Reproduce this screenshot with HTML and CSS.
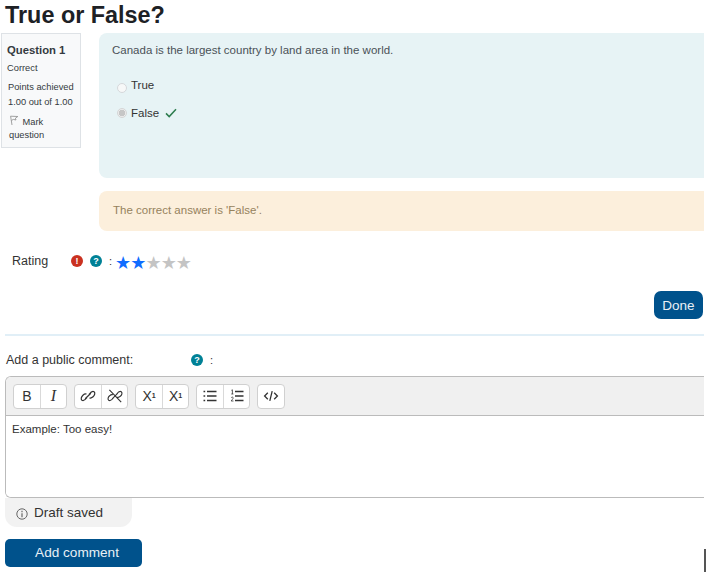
FILE: index.html
```html
<!DOCTYPE html>
<html lang="en">
<head>
<meta charset="utf-8">
<title>True or False?</title>
<link rel="stylesheet" href="styles.css">
</head>
<body>
<main class="page">
  <h1 class="title">True or False?</h1>
  <section class="question">
    <aside class="info">
      <h3 class="info-no">Question 1</h3>
      <div class="info-state">Correct</div>
      <div class="info-grade">Points achieved<br>1.00 out of 1.00</div>
      <div class="info-flag">
        <svg class="flag" viewBox="0 0 10 12" width="10" height="12"><path d="M1.5 1.2 8.8 1.5 6.4 3.2 7 5 4.3 4.4 2.6 5.4M1.6 1.2 3 10" fill="none" stroke="#8a8a8a" stroke-width=".8"/></svg>
        Mark question
      </div>
    </aside>
    <div class="qmain">
      <div class="formulation">
        <p class="qtext">Canada is the largest country by land area in the world.</p>
        <label class="answer answer-true"><span class="radio"></span><span class="answer-text">True</span></label>
        <label class="answer answer-false"><span class="radio radio-on"></span><span class="answer-text">False</span>
          <svg class="tick" viewBox="0 0 12 10" width="12" height="10"><path d="M1 5.4 4.2 8.6 11 1.2" fill="none" stroke="#2e7d4f" stroke-width="1.5"/></svg>
        </label>
      </div>
      <div class="outcome"><span class="outcome-text">The correct answer is 'False'.</span></div>
    </div>
  </section>
  <div class="rating">
    <span class="rating-label">Rating</span>
    <span class="badge badge-red">!</span>
    <span class="badge badge-teal">?</span>
    <span class="colon">:</span>
    <span class="stars"><span class="star star-on">★</span><span class="star star-on">★</span><span class="star">★</span><span class="star">★</span><span class="star">★</span></span>
  </div>
  <div class="done-row"><button class="btn btn-done">Done</button></div>
  <hr class="rule">
  <div class="comment-label">
    <span class="comment-text">Add a public comment:</span>
    <span class="badge badge-teal">?</span>
    <span class="colon">:</span>
  </div>
  <div class="editor">
    <div class="toolbar">
      <div class="group">
        <span class="tool tool-b">B</span>
        <span class="tool tool-i">I</span>
      </div>
      <div class="group">
        <span class="tool"><svg viewBox="0 0 16 16" width="18" height="18"><path d="M7 9.500c-1.400 1.800-3.200 3-4.400 2.200-1.200-.9-.6-3 .9-4.400 1-.9 2.200-1.400 3.100-1M9 6.500c1.400-1.800 3.200-3 4.400-2.200 1.200.9.600 3-.9 4.400-1 .9-2.200 1.400-3.100 1M5.500 10.500 10.500 5.500" fill="none" stroke="#333" stroke-width="1.100"/></svg></span>
        <span class="tool"><svg viewBox="0 0 16 16" width="18" height="18"><path d="M6.500 9.800c-1.300 1.700-3 2.800-4.100 2-1.100-.9-.6-2.700.8-4 .9-.9 2-1.300 2.900-.9M9.500 6.200c1.300-1.700 3-2.800 4.100-2 1.100.9.600 2.700-.8 4-.9.900-2 1.300-2.900.9M3 2.500 13.500 13.500M5.500 10.500 10.500 5.500" fill="none" stroke="#333" stroke-width="1"/></svg></span>
      </div>
      <div class="group">
        <span class="tool tool-x">X<sup class="script">1</sup></span>
        <span class="tool tool-x">X<sub class="script">1</sub></span>
      </div>
      <div class="group">
        <span class="tool"><svg viewBox="0 0 14 14" width="14" height="14"><path d="M4 2.500H13.500M4 7H13.500M4 11.500H13.500" stroke="#333" stroke-width="1.300"/><path d="M.5 2.500H2.200M.5 7H2.200M.5 11.500H2.200" stroke="#333" stroke-width="1.600"/></svg></span>
        <span class="tool"><svg viewBox="0 0 14 14" width="14" height="14"><path d="M5 2.500H13.500M5 7H13.500M5 11.500H13.500" stroke="#333" stroke-width="1.300"/><path d="M1.400 1.300 2.400.8V5M1.300 5H3.400M1.200 8.700C2 7.700 3.400 8 3.200 9.200 3 10.100 1.800 10.800 1.200 12H3.500" fill="none" stroke="#333" stroke-width=".8"/></svg></span>
      </div>
      <div class="group">
        <span class="tool"><svg viewBox="0 0 16 16" width="16" height="16"><path d="M4.800 4.800 1.600 8 4.800 11.200M11.200 4.800 14.400 8 11.200 11.200M9.200 3.200 6.800 12.800" fill="none" stroke="#333" stroke-width="1.300"/></svg></span>
      </div>
    </div>
    <div class="editor-body">Example: Too easy!</div>
  </div>
  <div class="draft">
    <svg class="draft-icon" viewBox="0 0 12 12" width="12" height="12"><circle cx="6" cy="6" r="5.200" fill="none" stroke="#666" stroke-width="1"/><path d="M6 5.200V9.200M6 2.800V4.200" stroke="#666" stroke-width="1.200"/></svg>
    <span>Draft saved</span>
  </div>
  <button class="btn btn-add"><span class="btn-add-text">Add comment</span></button>
</main>
<div class="corner-mark"></div>
</body>
</html>
```
FILE: styles.css
```css
* { box-sizing: border-box; }
html, body { margin: 0; padding: 0; background: #fff; height: 572px; overflow: hidden; }
body { font-family: "Liberation Sans", Arial, sans-serif; color: #333; font-size: 13px; position: relative; }
.page { width: 704px; display: flex; flex-direction: column; }
.title { margin: 0; padding: 2px 0 0 5px; height: 33px; font-size: 23.400px; line-height: 27px; font-weight: 700; color: #1d2125; }
.question { display: flex; align-items: flex-start; padding-left: 1px; gap: 18px; }
.info { width: 80px; height: 115px; flex: none; padding: 9px 5px 0 5px; background: #f8f9fa; border: 1px solid #dee2e6; font-size: 9.300px; line-height: 14px; color: #343a40; }
.info-no { margin: 0; font-size: 11.300px; line-height: 14px; font-weight: 700; }
.info-state { margin-top: 5px; line-height: 13px; }
.info-grade { margin-top: 5px; padding-left: 1px; line-height: 15px; }
.info-flag { margin-top: 5px; padding-left: 2px; line-height: 13px; width: 60px; }
.flag { vertical-align: -2px; margin-right: 1px; }
.qmain { flex: 1; display: flex; flex-direction: column; gap: 13px; }
.formulation { height: 145px; background: #e7f3f5; border-radius: 8px 0 0 8px; padding: 10px 13px; color: #4a5157; }
.qtext { margin: 0 0 24px; font-size: 11.500px; line-height: 14px; }
.answer { display: flex; align-items: center; font-size: 11.500px; color: #333; height: 14px; margin-bottom: 11px; padding-left: 5px; }
.answer-true .answer-text { position: relative; top: -3px; }
.radio { width: 10px; height: 10px; border-radius: 50%; border: 1px solid #d5d8db; background: #f7f8f8; margin-right: 4px; flex: none; }
.radio-on { background: radial-gradient(circle, #c6c6c6 0 3px, #ececec 3.500px); border-color: #d5d5d5; }
.answer-text { margin-right: 6px; }
.outcome { height: 40px; background: #fcefdc; border-radius: 8px 0 0 8px; padding: 0 14px; display: flex; align-items: center; font-size: 11.500px; color: #96825c; }
.outcome-text { position: relative; top: -1px; }
.rating { display: flex; align-items: center; height: 30px; margin-top: 15px; padding-left: 12px; font-size: 12.500px; }
.rating-label { width: 59px; }
.badge { width: 12px; height: 12px; border-radius: 50%; color: #fff; display: inline-flex; align-items: center; justify-content: center; font-size: 9px; font-weight: 700; flex: none; }
.badge-red { background: #ca3120; margin-right: 7px; }
.badge-teal { background: #008196; }
.colon { margin-left: 7px; font-size: 11px; }
.stars { display: flex; margin: 2px 0 0 3px; }
.star { width: 15.200px; font-size: 18px; line-height: 17px; color: #c4c4c4; text-align: center; font-family: "DejaVu Sans", sans-serif; }
.star-on { color: #0f6cff; }
.done-row { display: flex; justify-content: flex-end; margin-top: 15px; padding-right: 1px; }
.btn { background: #00528c; color: #e8f0f6; border: 0; font-family: inherit; font-size: 13px; padding: 0; }
.btn-done { width: 49px; height: 28px; border-radius: 7px; font-size: 13.500px; }
.rule { width: 699px; margin: 15px 0 0 5px; border: 0; border-top: 2px solid #e1eff7; height: 0; }
.comment-label { display: flex; align-items: center; height: 16px; margin-top: 16px; padding-left: 6px; font-size: 12.500px; }
.comment-text { width: 185px; }
.editor { margin: 8px 0 0 5px; height: 122px; border: 1px solid #bbb; border-right: 0; border-radius: 6px 0 0 6px; overflow: hidden; display: flex; flex-direction: column; }
.toolbar { height: 39px; background: #f0f0f0; border-bottom: 1px solid #bbb; display: flex; align-items: center; gap: 7px; padding: 0 7px; }
.group { display: flex; background: #fff; border: 1px solid #d0d0d0; border-radius: 4px; height: 25px; }
.tool { width: 26px; display: flex; align-items: center; justify-content: center; color: #333; font-size: 12px; border-left: 1px solid #d9d9d9; }
.tool:first-child { border-left: 0; }
.tool-b { font-size: 14px; font-family: "Liberation Sans", sans-serif; }
.tool-i { font-family: "Liberation Serif", serif; font-style: italic; font-size: 16px; }
.tool-x { font-size: 14px; }
.script { font-size: 7px; line-height: 0; font-weight: 700; }
.editor-body { flex: 1; background: #fff; padding: 6px 6px; font-size: 11.500px; line-height: 14px; color: #333; }
.draft { width: 127px; height: 29px; margin-left: 5px; background: #f2f2f2; border-radius: 0 0 12px 12px; display: flex; align-items: center; padding-left: 11px; gap: 6px; font-size: 13.500px; color: #333; }
.draft-icon { position: relative; top: 1px; }
.btn-add { width: 137px; height: 28px; margin: 12px 0 0 5px; border-radius: 5px; font-size: 13.600px; padding-left: 7px; }
.btn-add-text { position: relative; top: -1px; }
.corner-mark { position: absolute; right: 0; top: 549px; width: 2px; height: 23px; background: #555; }
```
